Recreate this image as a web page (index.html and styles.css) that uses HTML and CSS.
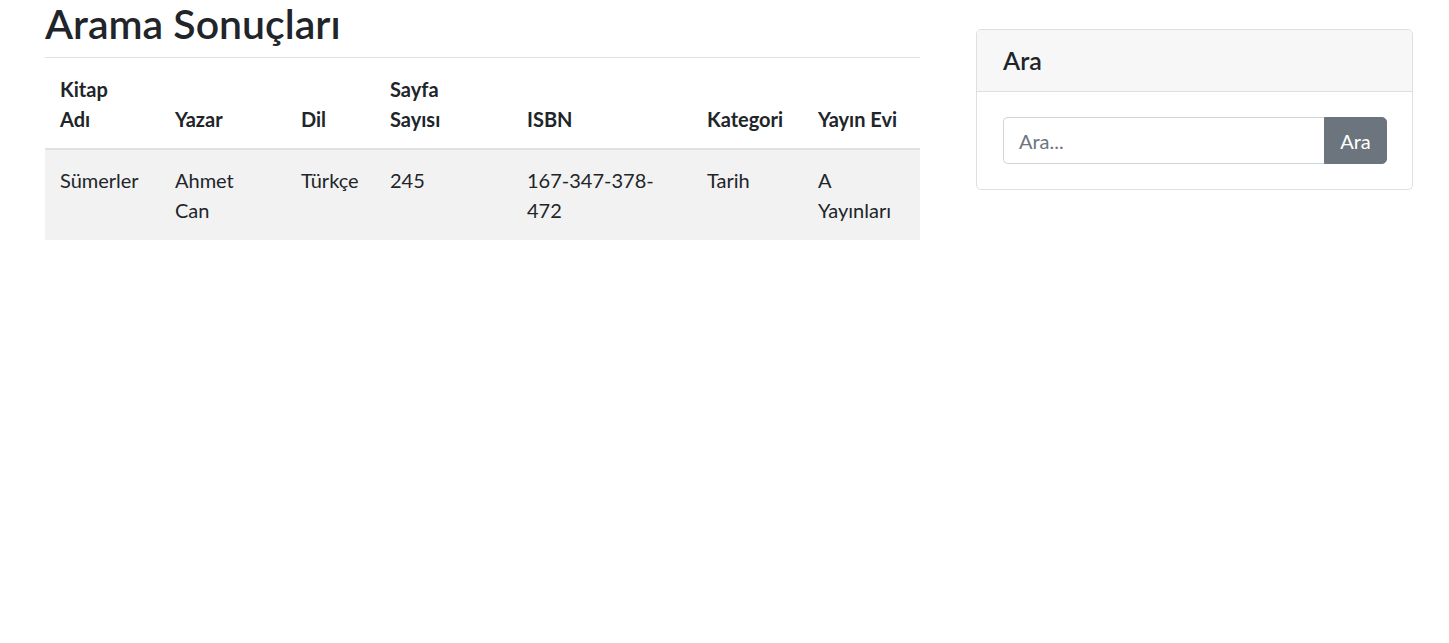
FILE: index.html
```html
<!DOCTYPE html>
<html lang="tr">
<head>
<meta charset="utf-8">
<title>Arama Sonuçları</title>
<link rel="stylesheet" href="styles.css">
</head>
<body>
<div class="page">
  <main class="main">
    <h1 class="title">Arama Sonuçları</h1>
    <table class="results">
      <colgroup>
        <col class="c1"><col class="c2"><col class="c3"><col class="c4"><col class="c5"><col class="c6"><col class="c7">
      </colgroup>
      <thead>
        <tr>
          <th><span class="stack">Kitap Adı</span></th>
          <th>Yazar</th>
          <th>Dil</th>
          <th><span class="stack">Sayfa Sayısı</span></th>
          <th>ISBN</th>
          <th>Kategori</th>
          <th>Yayın Evi</th>
        </tr>
      </thead>
      <tbody>
        <tr>
          <td>Sümerler</td>
          <td>Ahmet Can</td>
          <td>Türkçe</td>
          <td>245</td>
          <td>167-347-378-472</td>
          <td>Tarih</td>
          <td>A Yayınları</td>
        </tr>
      </tbody>
    </table>
  </main>
  <aside class="sidebar">
    <div class="card">
      <h5 class="card-header">Ara</h5>
      <div class="card-body">
        <form class="search">
          <input class="search-input" type="text" placeholder="Ara...">
          <button class="search-btn" type="button">Ara</button>
        </form>
      </div>
    </div>
  </aside>
</div>
</body>
</html>
```

FILE: styles.css
```css
* { box-sizing: border-box; }
html, body { margin: 0; padding: 0; background: #fff; }
body {
  font-family: Lato, "Open Sans", "DejaVu Sans", sans-serif;
  font-size: 20px;
  line-height: 1.5;
  color: #212529;
}
.page {
  display: flex;
  align-items: flex-start;
  padding-left: 45px;
}
.main {
  width: 875px;
  flex: none;
}
.title {
  font-size: 41px;
  font-weight: 600;
  line-height: 44px;
  margin: 2px 0 11px;
  color: #212529;
}
.results {
  width: 100%;
  border-collapse: collapse;
  table-layout: fixed;
}
.c1 { width: 115px; }
.c2 { width: 126px; }
.c3 { width: 89px; }
.c4 { width: 137px; }
.c5 { width: 180px; }
.c6 { width: 111px; }
.c7 { width: 117px; }
.results th, .results td {
  padding: 15px;
  text-align: left;
  vertical-align: top;
  border-top: 1px solid #dee2e6;
}
.results th {
  font-weight: 700;
  vertical-align: bottom;
  padding-top: 16px;
  padding-bottom: 14px;
  border-bottom: 2px solid #dee2e6;
}
.stack {
  display: inline-block;
  width: min-content;
}
.results tbody tr { background: #f2f2f2; }
.sidebar {
  width: 437px;
  flex: none;
  margin-left: 56px;
  margin-top: 29px;
}
.card {
  border: 1px solid #dfdfdf;
  border-radius: 5px;
  overflow: hidden;
}
.card-header {
  margin: 0;
  padding: 15px 26px;
  font-size: 25px;
  font-weight: 600;
  line-height: 31px;
  background: #f7f7f7;
  border-bottom: 1px solid #dfdfdf;
}
.card-body { padding: 25px 25px 25px 26px; }
.search { display: flex; margin: 0; }
.search-input {
  flex: 1;
  min-width: 0;
  height: 47px;
  padding: 7px 15px;
  font: inherit;
  color: #495057;
  border: 1px solid #ced4da;
  border-right: none;
  border-radius: 5px 0 0 5px;
  outline: none;
}
.search-input::placeholder { color: #6c757d; opacity: 1; }
.search-btn {
  width: 63px;
  height: 47px;
  font: inherit;
  color: #fff;
  background: #6c757d;
  border: 1px solid #6c757d;
  border-radius: 0 5px 5px 0;
  padding: 0;
}
```
